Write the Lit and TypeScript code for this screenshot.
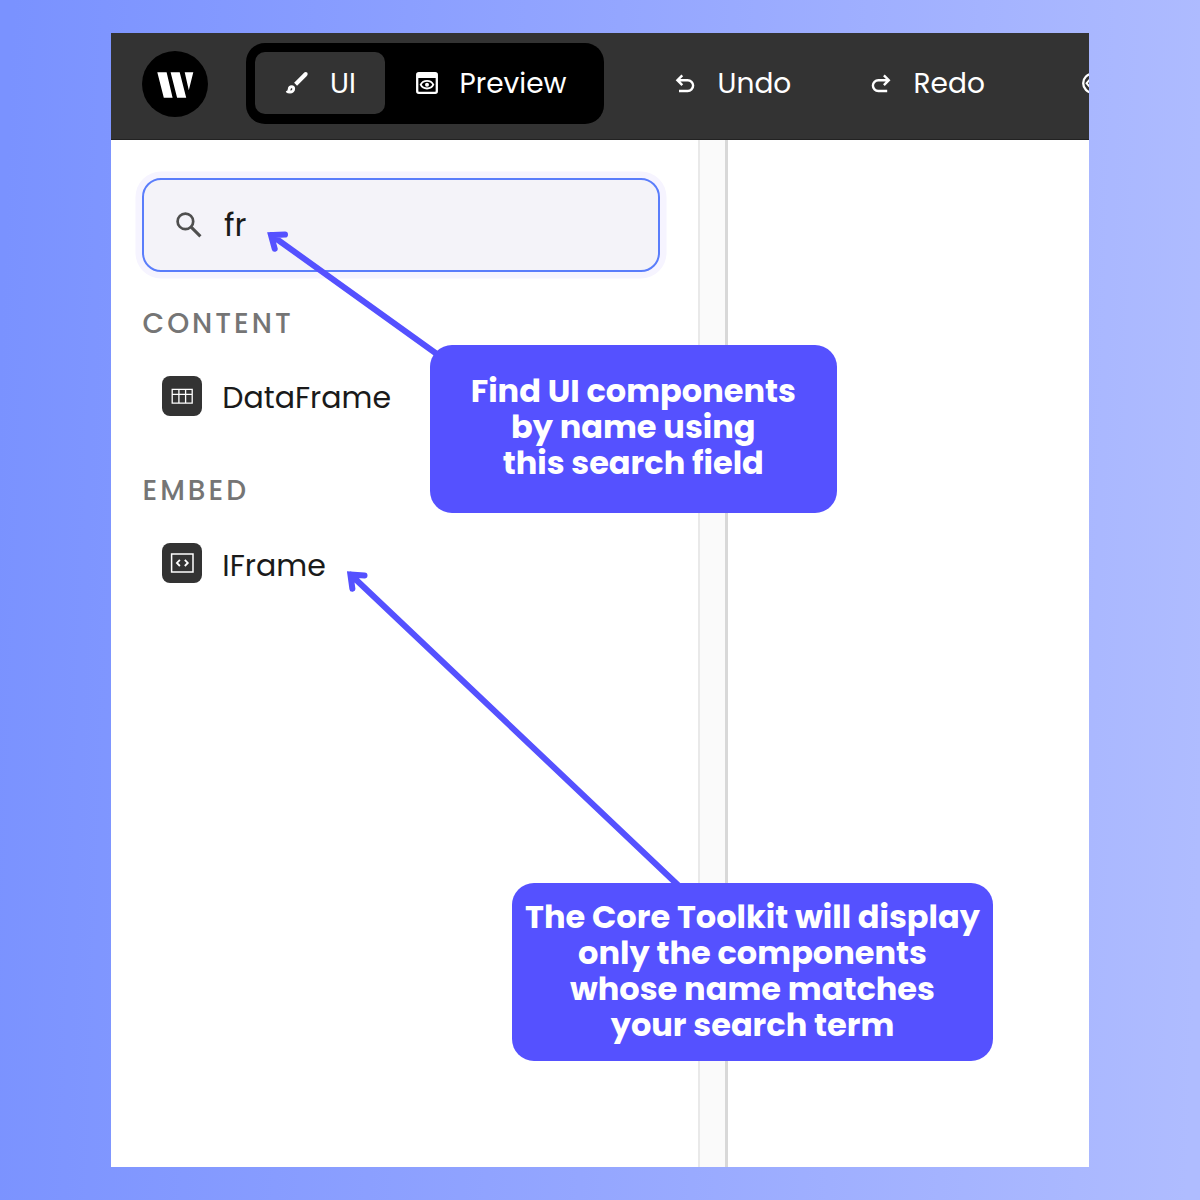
import { LitElement, html, css, svg } from "lit";
import { customElement } from "lit/decorators.js";

const brushIcon = html`<svg class="icon" width="24" height="24" viewBox="0 0 24 24">
  <path d="M10.6 13.2 20.6 3.2" fill="none" stroke="#fff" stroke-width="4.2" stroke-linecap="butt" />
  <circle cx="20.7" cy="3.1" r="2" fill="#fff" />
  <path d="M1.6 20.7C3 20.5 3.4 19.4 3.5 18.1C3.7 16.2 5 15 6.6 15C8.3 15 9.4 16.2 9.4 17.8C9.4 20.2 7.3 21.9 5 21.9C3.6 21.9 2.3 21.5 1.6 20.7Z" fill="#fff" stroke="#fff" stroke-width="1.4" stroke-linejoin="round" />
  <path d="M5.3 19.6C5.6 18.9 5.4 18 6 17.4C6.7 16.9 7.5 17.4 7.3 18.2C7.1 19 6.3 19.6 5.3 19.6Z" fill="#333" />
</svg>`;

const previewIcon = html`<svg class="icon" width="24" height="24" viewBox="0 0 24 24">
  <rect x="2.2" y="2.2" width="19.6" height="19.6" rx="1.6" fill="none" stroke="#fff" stroke-width="2.3" />
  <path d="M2.2 2.4h19.6v4.6H2.2z" fill="#fff" />
  <path d="M5.7 13.7C6.9 11.3 9.3 9.9 12 9.9S17.1 11.3 18.3 13.7C17.1 16.1 14.7 17.5 12 17.5S6.9 16.1 5.7 13.7Z" fill="none" stroke="#fff" stroke-width="1.9" />
  <circle cx="12" cy="13.7" r="2" fill="#fff" />
</svg>`;

const undoIcon = html`<svg class="icon" width="20" height="20" viewBox="0 0 20 20">
  <path d="M7.3 1.3 2.4 6.2 7.3 11.1M2.6 6.2H12.7a5.4 5.4 0 0 1 0 10.8H4" fill="none" stroke="#fff" stroke-width="2.4" />
</svg>`;

const redoIcon = html`<svg class="icon" width="20" height="20" viewBox="0 0 20 20">
  <path d="M12.9 1.3 17.8 6.2 12.9 11.1M17.6 6.2H7.3a5.4 5.4 0 0 0 0 10.8H16.2" fill="none" stroke="#fff" stroke-width="2.4" />
</svg>`;

const searchIcon = html`<svg class="icon" width="28" height="28" viewBox="0 0 28 28">
  <circle cx="10.4" cy="10.4" r="7.8" fill="none" stroke="#4f4f4f" stroke-width="2.7" />
  <path d="M16.2 16.2 25.4 25.4" fill="none" stroke="#4f4f4f" stroke-width="3.1" />
</svg>`;

const tableGlyph = svg`<path d="M10.2 13.3h20v13.8h-20zM10.2 18.4h20M16.9 13.3v13.8M23.6 13.3v13.8" fill="none" stroke="#fff" stroke-width="1.3" />`;
const embedGlyph = svg`<path d="M9.6 10.9h21.4v18H9.6z" fill="none" stroke="#fff" stroke-width="1.5" />
  <path d="M17.9 16.8l-3 3.1 3 3.1M22.8 16.8l3 3.1-3 3.1" fill="none" stroke="#fff" stroke-width="1.8" />`;

const groups = [
  { title: "CONTENT", items: [{ name: "DataFrame", glyph: tableGlyph }] },
  { title: "EMBED", items: [{ name: "IFrame", glyph: embedGlyph }] },
];

@customElement("app-root")
export class AppRoot extends LitElement {
  static styles = css`
    :host {
      display: block;
      position: relative;
      box-sizing: border-box;
      width: 1200px;
      height: 1200px;
      overflow: hidden;
      padding: 33px 111px 33px 110.5px;
      background: linear-gradient(92deg, #7a92ff 1%, #94a6ff 50%, #afbcff 99%);
      font-family: Poppins, Inter, "Open Sans", sans-serif;
    }
    .window {
      display: flex;
      flex-direction: column;
      height: 1134px;
      background: #fff;
      overflow: hidden;
    }
    .bar {
      display: flex;
      align-items: center;
      flex: none;
      box-sizing: border-box;
      height: 107px;
      padding: 0 0 5px 31.5px;
      background: #333;
      border-bottom: 1px solid #222;
      color: #fff;
      font-size: 28px;
      line-height: 40px;
      white-space: nowrap;
    }
    .bar > * { flex: none; }
    .bar span { padding-top: 1px; }
    .icon, .logo, .tile { display: block; flex: none; }
    .switch {
      display: flex;
      box-sizing: border-box;
      width: 358.4px;
      height: 81.4px;
      margin-left: 37.6px;
      padding: 9.7px 9px;
      border-radius: 19px;
      background: #000;
    }
    .tab {
      display: flex;
      align-items: center;
      height: 62px;
      box-sizing: border-box;
      border-radius: 10px;
    }
    .tab.active { width: 130px; padding-left: 30px; gap: 21.5px; background: #333; }
    .tab.preview { padding-left: 30px; gap: 21px; }
    .action { display: flex; align-items: center; gap: 23px; }
    .undo { margin-left: 70.6px; width: 196px; }
    .redo { width: 210px; }
    .body { display: flex; flex: 1; }
    .panel {
      box-sizing: border-box;
      width: 587px;
      padding: 38px 38px 0 31.5px;
    }
    .search {
      display: flex;
      align-items: center;
      gap: 21px;
      box-sizing: border-box;
      height: 94px;
      padding-left: 31px;
      border: 2px solid #5a7dfb;
      border-radius: 19px;
      background: #f4f3f9;
      box-shadow: 0 0 0 6.5px #f6f4ff;
      color: #1a1a1a;
      font-size: 32px;
    }
    .heading {
      margin-top: 36px;
      padding-left: 0.5px;
      height: 32px;
      color: #757575;
      font-size: 28px;
      font-weight: 500;
      line-height: 32px;
      letter-spacing: 3px;
    }
    .item {
      display: flex;
      align-items: center;
      gap: 20.3px;
      height: 40px;
      margin: 35.6px 0 59.7px 20px;
      color: #1a1a1a;
      font-size: 30px;
    }
    .item .name { padding-top: 5.4px; }
    .splitter {
      box-sizing: border-box;
      width: 30px;
      background: #fafafa;
      border-left: 2px solid #e9e9e9;
      border-right: 3px solid #d8d8d8;
    }
    .arrows { position: absolute; left: 0; top: 0; }
    .callout {
      position: absolute;
      box-sizing: border-box;
      border-radius: 22px;
      background: #5551ff;
      color: #fff;
      font-size: 32px;
      font-weight: 700;
      line-height: 36px;
      text-align: center;
      white-space: nowrap;
    }
    .line { display: block; }
    .find { left: 430px; top: 345px; width: 406.5px; height: 168px; padding-top: 27.5px; }
    .result { left: 512px; top: 883px; width: 481px; height: 178px; padding-top: 15.5px; }
  `;

  render() {
    return html`
      <div class="window">
        <div class="bar">
          <svg class="logo" width="66" height="66" viewBox="0 0 66 66">
            <circle cx="33" cy="33" r="33" fill="#000" />
            <path d="M15.3 21.3H24.6L30.6 46.8H21.8ZM28.6 21.3H37.7L44.2 46.8H35.1ZM42.7 21.3H51.3L46.8 39.2Z" fill="#fff" />
          </svg>
          <div class="switch">
            <div class="tab active">${brushIcon}<span>UI</span></div>
            <div class="tab preview">${previewIcon}<span>Preview</span></div>
          </div>
          <div class="action undo">${undoIcon}<span>Undo</span></div>
          <div class="action redo">${redoIcon}<span>Redo</span></div>
          <svg class="icon" width="28" height="28" viewBox="0 0 28 28">
            <circle cx="11.6" cy="13.2" r="9.4" fill="none" stroke="#fff" stroke-width="2.3" />
            <path d="M9.6 8.6 5.6 13.2 9.6 17.8M9.6 11.4v3.6" fill="none" stroke="#fff" stroke-width="2" />
          </svg>
        </div>
        <div class="body">
          <div class="panel">
            <div class="search">${searchIcon}<span>fr</span></div>
            ${groups.map(
              (g) => html`
                <div class="heading">${g.title}</div>
                ${g.items.map(
                  (i) => html`<div class="item">
                    <svg class="tile" width="40" height="40" viewBox="0 0 40 40">
                      <rect width="40" height="40" rx="8" fill="#333" />
                      ${i.glyph}
                    </svg>
                    <span class="name">${i.name}</span>
                  </div>`
                )}
              `
            )}
          </div>
          <div class="splitter"></div>
        </div>
      </div>
      <svg class="arrows" width="1200" height="1200" viewBox="0 0 1200 1200" fill="none" stroke="#5551ff" stroke-width="6" stroke-linecap="round" stroke-linejoin="miter">
        <path d="M271.4 235.2 440 356.3M285 234.6 271 235.2 274.7 248.8" />
        <path d="M350.8 574.7 680 887M364.5 575.5 350.4 574.5 352.4 588.8" />
      </svg>
      <div class="callout find">
        <span class="line">Find UI components</span>
        <span class="line">by name using</span>
        <span class="line">this search field</span>
      </div>
      <div class="callout result">
        <span class="line">The Core Toolkit will display</span>
        <span class="line">only the components</span>
        <span class="line">whose name matches</span>
        <span class="line">your search term</span>
      </div>
    `;
  }
}
